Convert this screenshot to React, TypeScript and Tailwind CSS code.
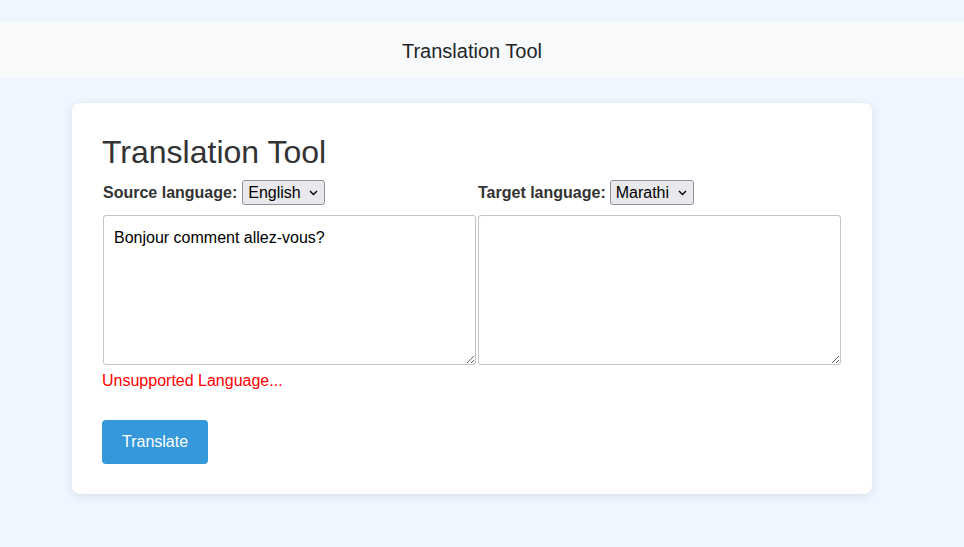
import React, { useState } from 'react'

const languages = ['English', 'French', 'Spanish', 'German', 'Hindi', 'Marathi']

function LangSelect({ value, onChange, width }: { value: string; onChange: (v: string) => void; width: string }) {
	return (
		<span className="relative inline-block">
			<select
				value={value}
				onChange={(e) => onChange(e.target.value)}
				className={`appearance-none h-[25px] pl-[5px] pr-[20px] border border-[#8f8f9d] rounded-[3px] bg-[#e9e9ed] text-[16px] text-black font-normal leading-[23px] ${width}`}
			>
				{languages.map((l) => (
					<option key={l}>{l}</option>
				))}
			</select>
			<svg
				className="absolute right-[7px] top-[10px] pointer-events-none"
				width="9"
				height="6"
				viewBox="0 0 9 6"
				fill="none"
			>
				<path d="M1 1l3.5 3.5L8 1" stroke="#000" strokeWidth="1.4" />
			</svg>
		</span>
	)
}

export default function App() {
	const [source, setSource] = useState('English')
	const [target, setTarget] = useState('Marathi')
	const [text, setText] = useState('Bonjour comment allez-vous?')

	return (
		<div className="min-h-[547px] bg-[#eff6ff] pt-[22px] font-['Liberation_Sans',Arial,sans-serif] text-[#333]">
			<header className="h-[56px] bg-[#f8f9fa] flex items-center justify-center pr-[20px] pt-[2px] text-[20px] text-[#212529]">
				Translation Tool
			</header>

			<div className="w-[944px]">
				<div className="w-[800px] mx-auto mt-[25px] bg-white rounded-[8px] shadow-[0_2px_10px_rgba(0,0,0,0.1)] p-[30px]">
					<h1 className="text-[32px] leading-[39px] text-[#333]">Translation Tool</h1>

					<div className="flex mt-[8px] pl-[1px]">
						<div className="w-[373px]">
							<label className="font-bold text-[16px] flex items-center gap-[5px] h-[25px]">
								Source language:
								<LangSelect value={source} onChange={setSource} width="w-[83px]" />
							</label>
							<textarea
								value={text}
								onChange={(e) => setText(e.target.value)}
								className="block w-full h-[150px] mt-[10px] border border-[#c4c4c4] rounded-[3px] px-[10px] py-[11px] text-[16px] text-black leading-[22px]"
							/>
						</div>
						<div className="w-[363px] ml-[2px]">
							<label className="font-bold text-[16px] flex items-center gap-[4px] h-[25px]">
								Target language:
								<LangSelect value={target} onChange={setTarget} width="w-[84px]" />
							</label>
							<textarea
								readOnly
								className="block w-full h-[150px] mt-[10px] border border-[#c4c4c4] rounded-[3px] px-[10px] py-[11px] text-[16px] text-black"
							/>
						</div>
					</div>

					<p className="mt-[7px] text-[16px] leading-[18px] text-[#ff0000]">Unsupported Language...</p>

					<button className="mt-[30px] h-[44px] px-[20px] rounded-[4px] bg-[#3498db] text-white text-[16px]">
						Translate
					</button>
				</div>
			</div>
		</div>
	)
}
